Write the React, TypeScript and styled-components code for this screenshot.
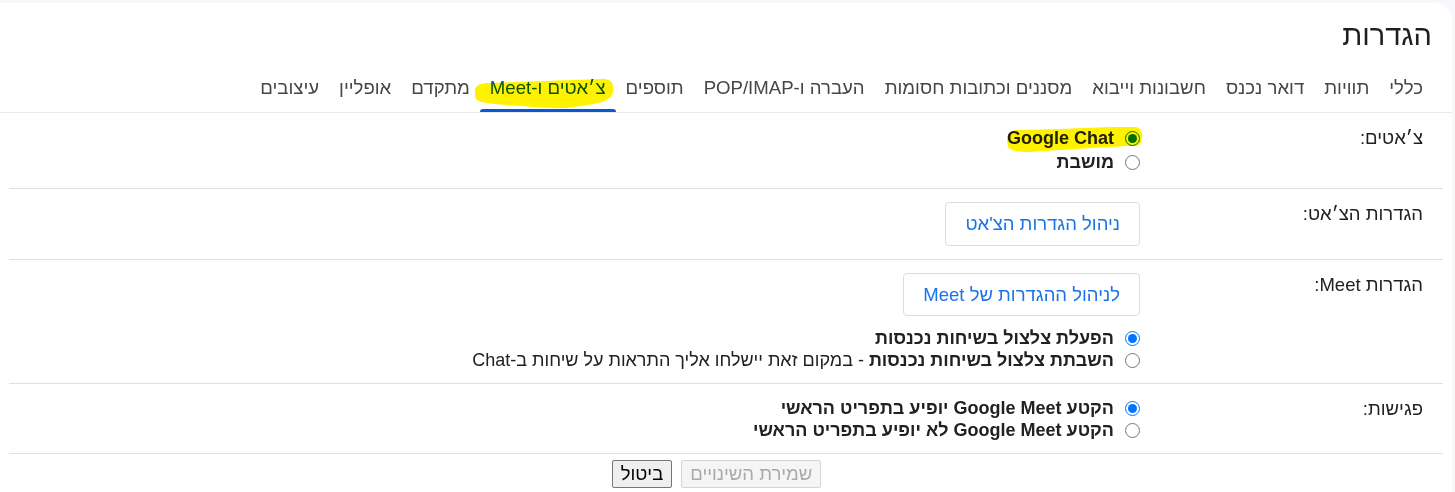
import React from "react";
import styled, { createGlobalStyle } from "styled-components";

const GlobalStyle = createGlobalStyle`
  html, body { margin: 0; padding: 0; }
  body {
    background: #f6f8fc;
    font-family: "Liberation Sans", Arial, sans-serif;
    color: #202124;
  }
`;

const Page = styled.div`
  padding: 3px 3px 0 0;
  min-height: 489px;
`;

const Panel = styled.div`
  background: #ffffff;
  border-radius: 0 16px 0 0;
  min-height: 489px;
  display: flex;
  flex-direction: column;
`;

const Title = styled.h1`
  margin: 0;
  padding: 15px 20px 0 0;
  font-weight: 400;
  font-size: 29px;
  line-height: 34px;
  color: #1f1f1f;
`;

const TabBar = styled.nav`
  margin-top: 12px;
  padding-right: 19px;
  display: flex;
  border-bottom: 1px solid #e6e9ee;
`;

const Tab = styled.div<{ $active?: boolean }>`
  position: relative;
  height: 48px;
  line-height: 48px;
  padding: 0 10px;
  font-size: 18.6px;
  white-space: nowrap;
  color: ${(p) => (p.$active ? "#0b57d0" : "#444746")};
  &::after {
    content: "";
    display: ${(p) => (p.$active ? "block" : "none")};
    position: absolute;
    left: 0;
    right: 0;
    bottom: 0;
    height: 3px;
    background: #0b57d0;
    border-radius: 3px 3px 0 0;
  }
`;

const Marker = styled.svg`
  position: absolute;
  pointer-events: none;
  mix-blend-mode: multiply;
  overflow: visible;
`;

const TabMarker = styled(Marker)`
  left: -6px;
  top: 14px;
  width: 140px;
  height: 34px;
`;

const OptionMarker = styled(Marker)`
  right: -2px;
  top: 0px;
  width: 135px;
  height: 27px;
`;

const Rows = styled.div`
  padding: 0 9px;
`;

const Row = styled.div<{ $extra?: number }>`
  display: grid;
  grid-template-columns: 303px 1fr;
  padding: 13px 0 ${(p) => 12 + (p.$extra ?? 0)}px;
  border-bottom: 1px solid #e0e0e0;
`;

const Label = styled.div`
  padding-right: 20px;
  font-size: 18.5px;
  line-height: 24px;
  color: #202124;
`;

const Content = styled.div`
  display: flex;
  flex-direction: column;
  align-items: flex-start;
`;

const Option = styled.label<{ $lh?: number }>`
  position: relative;
  display: flex;
  align-items: center;
  gap: 11px;
  font-size: 18px;
  line-height: ${(p) => p.$lh ?? 22}px;
  font-weight: 700;
  color: #202124;
  white-space: nowrap;
`;

const Note = styled.span`
  font-weight: 400;
`;

const Radio = styled.input.attrs({ type: "radio" })`
  width: 15px;
  height: 15px;
  margin: 0;
  flex: none;
`;

const LinkButton = styled.button<{ $h: number }>`
  height: ${(p) => p.$h}px;
  padding: 0 19px;
  background: #ffffff;
  border: 1px solid #dadce0;
  border-radius: 4px;
  font-family: inherit;
  font-size: 18.5px;
  color: #1a73e8;
  cursor: pointer;
`;

const Gap = styled.div`
  height: 11px;
`;

const Footer = styled.div`
  display: flex;
  justify-content: center;
  gap: 9px;
  padding: 6px 19px 0 0;
`;

const FormButton = styled.button`
  height: 28px;
  padding: 0 8px;
  font-family: inherit;
  font-size: 18.5px;
  border-radius: 2px;
  border: 1px solid #767676;
  background: #efefef;
  color: #000000;
  &:disabled {
    border-color: #d4d4d4;
    background: #f5f5f5;
    color: #a9a9a9;
  }
`;

const tabs = [
  "כללי",
  "תוויות",
  "דואר נכנס",
  "חשבונות וייבוא",
  "מסננים וכתובות חסומות",
  "העברה ו-POP/IMAP",
  "תוספים",
  "צ׳אטים ו-Meet",
  "מתקדם",
  "אופליין",
  "עיצובים",
];

const ACTIVE = "צ׳אטים ו-Meet";

export default function App() {
  return (
    <>
      <GlobalStyle />
      <Page dir="rtl">
        <Panel>
          <Title>הגדרות</Title>
          <TabBar>
            {tabs.map((t) => (
              <Tab key={t} $active={t === ACTIVE}>
                {t}
                {t === ACTIVE && (
                  <TabMarker viewBox="0 0 140 34">
                    <path
                      d="M1 12 C2 6 8 5 16 5 L70 3 L128 1 C135 1 139 3 139 9 L139 15 C137 21 130 24 120 26 L100 29 C88 31 76 30 60 29 L20 26 C8 25 1 23 1 18 Z"
                      fill="#fff200"
                    />
                  </TabMarker>
                )}
              </Tab>
            ))}
          </TabBar>
          <Rows>
            <Row $extra={2}>
              <Label>צ׳אטים:</Label>
              <Content>
                <Option $lh={24}>
                  <Radio name="chat" defaultChecked />
                  Google Chat
                  <OptionMarker viewBox="0 0 135 27">
                    <path
                      d="M0 14 C1 7 5 4 10 4 L53 3 L103 1 L129 1 C133 2 135 5 135 9 L134 17 C132 20 128 20 120 20 L103 21 L53 24 L23 26 C12 26 4 25 1 21 Z"
                      fill="#fff200"
                    />
                  </OptionMarker>
                </Option>
                <Option $lh={24}>
                  <Radio name="chat" />
                  מושבת
                </Option>
              </Content>
            </Row>
            <Row $extra={1}>
              <Label>הגדרות הצ׳אט:</Label>
              <Content>
                <LinkButton $h={44}>ניהול הגדרות הצ'אט</LinkButton>
              </Content>
            </Row>
            <Row>
              <Label>הגדרות Meet:</Label>
              <Content>
                <LinkButton $h={43}>לניהול ההגדרות של Meet</LinkButton>
                <Gap />
                <Option>
                  <Radio name="ring" defaultChecked />
                  הפעלת צלצול בשיחות נכנסות
                </Option>
                <Option>
                  <Radio name="ring" />
                  <span>
                    השבתת צלצול בשיחות נכנסות
                    <Note> - במקום זאת יישלחו אליך התראות על שיחות ב-Chat</Note>
                  </span>
                </Option>
              </Content>
            </Row>
            <Row>
              <Label>פגישות:</Label>
              <Content>
                <Option>
                  <Radio name="meet" defaultChecked />
                  הקטע Google Meet יופיע בתפריט הראשי
                </Option>
                <Option>
                  <Radio name="meet" />
                  הקטע Google Meet לא יופיע בתפריט הראשי
                </Option>
              </Content>
            </Row>
          </Rows>
          <Footer>
            <FormButton disabled>שמירת השינויים</FormButton>
            <FormButton>ביטול</FormButton>
          </Footer>
        </Panel>
      </Page>
    </>
  );
}
